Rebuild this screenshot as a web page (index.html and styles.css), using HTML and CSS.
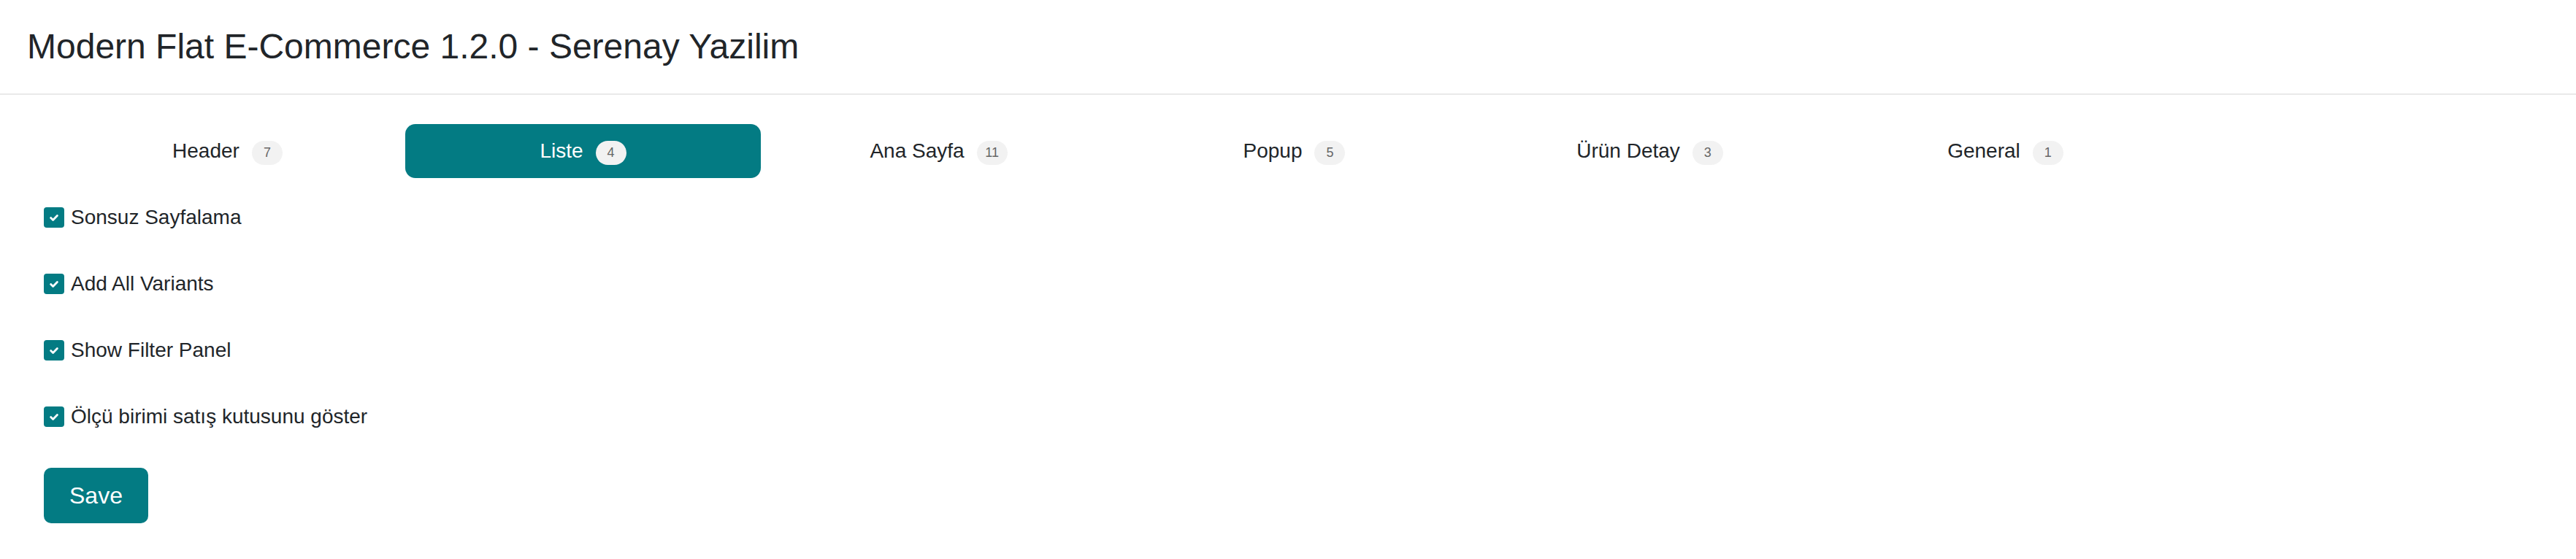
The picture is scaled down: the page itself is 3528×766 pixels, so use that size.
FILE: index.html
```html
<!DOCTYPE html>
<html>
<head lang="tr">
    <meta charset="UTF-8">
    <title>Modern Flat E-Commerce 1.2.0 - Serenay Yazilim</title>
    <link rel="stylesheet" href="styles.css">
</head>
<body>
<div class="page_header">
    <h1>Modern Flat E-Commerce 1.2.0 - Serenay Yazilim</h1>
</div>
<div class="content">
    <div class="tab_nav">
        <ul>
            <li><a href="#header">Header <span class="badge">7</span></a></li>
            <li class="active"><a href="#liste">Liste <span class="badge">4</span></a></li>
            <li><a href="#anasayfa">Ana Sayfa <span class="badge">11</span></a></li>
            <li><a href="#popup">Popup <span class="badge">5</span></a></li>
            <li><a href="#urundetay">Ürün Detay <span class="badge">3</span></a></li>
            <li><a href="#general">General <span class="badge">1</span></a></li>
        </ul>
    </div>
    <form class="settings">
        <div class="options">
            <label class="check">
                <span class="box"><svg viewBox="0 0 12 9" width="12" height="9"><path d="M1.6 4.6 L4.6 7.4 L10.4 1.6"/></svg></span>
                Sonsuz Sayfalama
            </label>
            <label class="check">
                <span class="box"><svg viewBox="0 0 12 9" width="12" height="9"><path d="M1.6 4.6 L4.6 7.4 L10.4 1.6"/></svg></span>
                Add All Variants
            </label>
            <label class="check">
                <span class="box"><svg viewBox="0 0 12 9" width="12" height="9"><path d="M1.6 4.6 L4.6 7.4 L10.4 1.6"/></svg></span>
                Show Filter Panel
            </label>
            <label class="check">
                <span class="box"><svg viewBox="0 0 12 9" width="12" height="9"><path d="M1.6 4.6 L4.6 7.4 L10.4 1.6"/></svg></span>
                Ölçü birimi satış kutusunu göster
            </label>
        </div>
        <button type="button" class="btn_save">Save</button>
    </form>
</div>
</body>
</html>
```
FILE: styles.css
```css
body {
    margin: 0;
    font-family: "Liberation Sans", Arial, sans-serif;
    color: #212529;
    background: #fff;
}
a {
    text-decoration: none;
    color: inherit;
}
.page_header {
    height: 128px;
    padding: 0 37px;
    display: flex;
    align-items: center;
    border-bottom: 2px solid #e9e9e9;
}
.page_header h1 {
    margin: 0;
    font-size: 48px;
    font-weight: normal;
    line-height: 1;
}
.content {
    padding: 40px 60px;
}
.tab_nav ul {
    list-style: none;
    margin: 0 0 0 8px;
    padding: 0;
    display: grid;
    grid-template-columns: repeat(6, 487px);
}
.tab_nav ul li a {
    height: 74px;
    display: flex;
    align-items: center;
    justify-content: center;
    gap: 17px;
    font-size: 28px;
    line-height: 1;
    border-radius: 14px;
}
.tab_nav ul li.active a {
    background: #037b83;
    color: #fff;
}
.tab_nav .badge {
    min-width: 42px;
    height: 33px;
    box-sizing: border-box;
    padding: 0 10px;
    display: inline-flex;
    align-items: center;
    justify-content: center;
    margin-top: 4px;
    border-radius: 17px;
    background: #f2f2f2;
    color: #666;
    font-size: 18px;
}
.settings {
    margin-top: 40px;
}
.options {
    display: flex;
    flex-direction: column;
    gap: 63px;
}
.check {
    display: flex;
    align-items: center;
    gap: 9px;
    font-size: 28px;
    line-height: 28px;
}
.check .box {
    width: 28px;
    height: 28px;
    border-radius: 4px;
    background: #037b83;
    display: flex;
    align-items: center;
    justify-content: center;
}
.check .box svg {
    overflow: visible;
}
.check .box svg path {
    fill: none;
    stroke: #fff;
    stroke-width: 2.8;
    stroke-linecap: round;
    stroke-linejoin: round;
}
.btn_save {
    margin-top: 56px;
    height: 76px;
    padding: 0 35px;
    border: 0;
    border-radius: 10px;
    background: #037b83;
    color: #fff;
    font-family: inherit;
    font-size: 32px;
}
```
